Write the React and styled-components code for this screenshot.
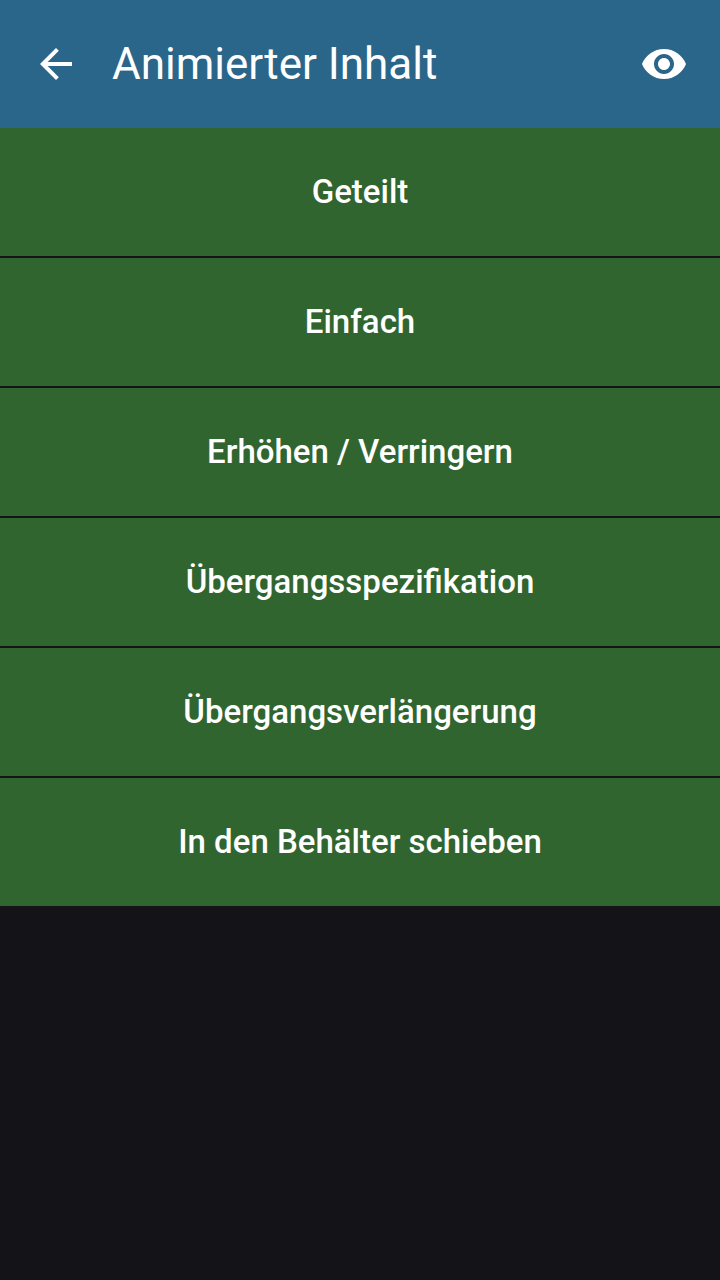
import React from "react";
import styled, { createGlobalStyle } from "styled-components";

const GlobalStyle = createGlobalStyle`
  *, *::before, *::after { box-sizing: border-box; }
  body { margin: 0; background: #141318; }
`;

const Screen = styled.div`
  min-height: 100vh;
  background: #141318;
  color: #fff;
  font-family: Roboto, sans-serif;
`;

const AppBar = styled.header`
  display: flex;
  align-items: center;
  height: 128px;
  padding: 0 8px;
  background: #2a6689;
`;

const Title = styled.h1`
  flex: 1;
  min-width: 0;
  margin: 0 0 0 8px;
  font-size: 44px;
  line-height: 56px;
  font-weight: 400;
`;

const IconButton = styled.button`
  display: flex;
  align-items: center;
  justify-content: center;
  width: 96px;
  height: 96px;
  padding: 0;
  border: 0;
  background: none;
  color: inherit;
  cursor: pointer;

  svg { width: 48px; height: 48px; fill: currentColor; }
`;

const Menu = styled.nav`
  display: flex;
  flex-direction: column;
  gap: 2px;
`;

const MenuButton = styled.button`
  width: 100%;
  height: 128px;
  padding: 0 32px;
  border: 0;
  background: #306530;
  color: inherit;
  font-family: inherit;
  font-size: 33px;
  line-height: 48px;
  font-weight: 500;
  text-align: center;
  cursor: pointer;
`;

const items = [
  "Geteilt",
  "Einfach",
  "Erhöhen / Verringern",
  "Übergangsspezifikation",
  "Übergangsverlängerung",
  "In den Behälter schieben",
];

export default function App() {
  return (
    <Screen>
      <GlobalStyle />
      <AppBar>
        <IconButton type="button" aria-label="Zurück">
          <svg viewBox="0 0 24 24" aria-hidden="true">
            <path d="M20 11H7.83l5.59-5.59L12 4l-8 8 8 8 1.41-1.41L7.83 13H20v-2z" />
          </svg>
        </IconButton>
        <Title>Animierter Inhalt</Title>
        <IconButton type="button" aria-label="Ansicht">
          <svg viewBox="0 0 24 24" aria-hidden="true">
            <path d="M12 4.5C7 4.5 2.73 7.61 1 12c1.73 4.39 6 7.5 11 7.5s9.27-3.11 11-7.5c-1.73-4.39-6-7.5-11-7.5zM12 17c-2.76 0-5-2.24-5-5s2.24-5 5-5 5 2.24 5 5-2.24 5-5 5zm0-8c-1.66 0-3 1.34-3 3s1.34 3 3 3 3-1.34 3-3-1.34-3-3-3z" />
          </svg>
        </IconButton>
      </AppBar>
      <Menu>
        {items.map((item) => (
          <MenuButton type="button" key={item}>{item}</MenuButton>
        ))}
      </Menu>
    </Screen>
  );
}
